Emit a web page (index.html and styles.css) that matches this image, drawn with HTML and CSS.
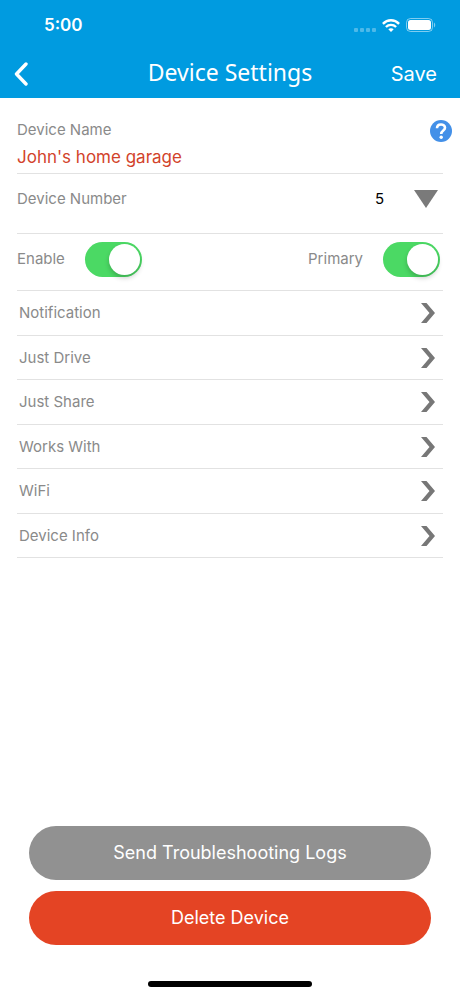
FILE: index.html
```html
<!DOCTYPE html>
<html lang="en">
<head>
<meta charset="utf-8">
<meta name="viewport" content="width=device-width, initial-scale=1">
<title>Device Settings</title>
<link rel="stylesheet" href="styles.css">
</head>
<body>
<svg width="0" height="0" class="sprite" aria-hidden="true">
  <symbol id="chevron" viewBox="0 0 14 20"><path d="M0 0H5.500L14 10L5.500 20H0L8.500 10Z" fill="currentColor"/></symbol>
</svg>
<div class="screen">
  <header class="header">
    <div class="status">
      <span class="time">5:00</span>
      <div class="indicators">
        <svg width="22" height="4" viewBox="0 0 22 4" class="signal" aria-hidden="true"><rect x="0" width="4" height="4" rx="1"/><rect x="6" width="4" height="4" rx="1"/><rect x="12" width="4" height="4" rx="1"/><rect x="18" width="4" height="4" rx="1"/></svg>
        <svg width="18" height="13" viewBox="0 0 18 13" aria-hidden="true"><g fill="none" stroke="#fff" stroke-width="2.4"><path d="M.9 4.8C5.500 .1 12.500 .1 17.100 4.800"/><path d="M3.900 8C6.800 5.200 11.200 5.200 14.100 8"/></g><path d="M9 13L6.300 10.200C7.800 8.800 10.200 8.800 11.700 10.200Z" fill="#fff"/></svg>
        <svg width="30" height="14" viewBox="0 0 30 14" aria-hidden="true"><rect x=".5" y=".5" width="26" height="13" rx="4" fill="none" stroke="#fff" stroke-opacity=".5"/><rect x="2" y="2" width="23" height="10" rx="2.500" fill="#fff"/><path d="M28 4.500C29.600 5.200 29.600 8.800 28 9.500Z" fill="#fff" fill-opacity=".5"/></svg>
      </div>
    </div>
    <nav class="nav">
      <button class="back" type="button" aria-label="Back"><svg width="14" height="24" viewBox="0 0 14 24" aria-hidden="true"><path d="M12 2L2.500 12L12 22" fill="none" stroke="#fff" stroke-width="3.400" stroke-linecap="round" stroke-linejoin="round"/></svg></button>
      <h1 class="title">Device Settings</h1>
      <button class="save" type="button">Save</button>
    </nav>
  </header>
  <main class="content">
    <div class="field name-field">
      <label class="label" for="device-name">Device Name</label>
      <input class="name-input" id="device-name" type="text" value="John's home garage">
      <button class="help" type="button" aria-label="Help"><svg width="22" height="22" viewBox="0 0 22 22" aria-hidden="true"><circle cx="11" cy="11" r="11" fill="#4390e8"/><path d="M7 8.200C7 3.300 15 3.300 15 7.800C15 10.600 11.200 10.400 11.200 14" fill="none" stroke="#fff" stroke-width="2.600"/><circle cx="11.200" cy="17.300" r="1.700" fill="#fff"/></svg></button>
    </div>
    <div class="field number-field">
      <label class="label" for="device-number">Device Number</label>
      <div class="picker">
        <select class="number" id="device-number"><option>5</option></select>
        <svg class="arrow" width="24" height="18" viewBox="0 0 24 18" aria-hidden="true"><path d="M0 0H24L12 18Z" fill="#7a7a7a"/></svg>
      </div>
    </div>
    <div class="field toggles">
      <label class="toggle"><span class="label">Enable</span><input class="switch" type="checkbox" role="switch" checked></label>
      <label class="toggle"><span class="label">Primary</span><input class="switch" type="checkbox" role="switch" checked></label>
    </div>
    <div class="links">
      <a class="link" href="#notification">Notification<svg class="chevron" aria-hidden="true"><use href="#chevron"/></svg></a>
      <a class="link" href="#drive">Just Drive<svg class="chevron" aria-hidden="true"><use href="#chevron"/></svg></a>
      <a class="link" href="#share">Just Share<svg class="chevron" aria-hidden="true"><use href="#chevron"/></svg></a>
      <a class="link" href="#works">Works With<svg class="chevron" aria-hidden="true"><use href="#chevron"/></svg></a>
      <a class="link" href="#wifi">WiFi<svg class="chevron" aria-hidden="true"><use href="#chevron"/></svg></a>
      <a class="link" href="#info">Device Info<svg class="chevron" aria-hidden="true"><use href="#chevron"/></svg></a>
    </div>
  </main>
  <footer class="actions">
    <button class="action" type="button">Send Troubleshooting Logs</button>
    <button class="action danger" type="button">Delete Device</button>
    <div class="home-bar"></div>
  </footer>
</div>
</body>
</html>
```
FILE: styles.css
```css
* { box-sizing: border-box; }
body {
  margin: 0;
  background: #fff;
  color: #8a8a8a;
  font: 15px/20px Inter, "Liberation Sans", sans-serif;
}
button, input, select { font: inherit; border: 0; padding: 0; background: none; }
button, select { cursor: pointer; }
.sprite { position: absolute; }
.screen { display: flex; flex-direction: column; min-height: 100vh; }

.header { background: #009be0; color: #fff; }
.status {
  display: flex;
  justify-content: space-between;
  align-items: center;
  height: 50px;
  padding: 0 24px 0 44px;
}
.time { font-size: 17px; font-weight: 600; }
.indicators { display: flex; align-items: center; gap: 6px; }
.signal { align-self: flex-end; fill: #fff; fill-opacity: .3; }
.nav {
  display: grid;
  grid-template-columns: 1fr auto 1fr;
  align-items: center;
  height: 48px;
  padding: 0 14px;
}
.back { display: flex; justify-self: start; }
.title { margin: 0; padding-bottom: 4px; font: 400 23px/32px "Noto Sans", sans-serif; }
.save { justify-self: end; padding-right: 9px; color: #fff; font-size: 20px; }

.content { flex: 1; padding: 0 17px; }
.field { border-bottom: 1px solid #e2e2e2; }
.name-field {
  position: relative;
  display: flex;
  flex-direction: column;
  height: 76px;
  padding-top: 22px;
}
.name-input { width: 90%; margin-top: 4px; height: 26px; color: #d2432b; font-size: 17px; }
.help { position: absolute; top: 22px; right: -9px; display: flex; }
.number-field {
  display: flex;
  justify-content: space-between;
  align-items: center;
  height: 60px;
  padding-bottom: 9px;
}
.picker { display: grid; align-items: center; justify-items: end; }
.picker > * { grid-area: 1 / 1; }
.number { appearance: none; width: 68px; height: 32px; color: #000; }
.arrow { margin-right: 5px; pointer-events: none; }
.toggles {
  display: flex;
  justify-content: space-between;
  align-items: center;
  height: 57px;
  padding: 0 3px 6px 0;
}
.toggle { display: flex; align-items: center; gap: 20px; }
.switch {
  appearance: none;
  display: flex;
  width: 57px;
  height: 35px;
  margin: 0;
  padding: 2px;
  border-radius: 18px;
  background: #ccc;
}
.switch::before {
  content: "";
  width: 31px;
  height: 31px;
  border-radius: 50%;
  background: #fff;
  box-shadow: 0 3px 5px #0003;
}
.switch:checked { justify-content: flex-end; background: #4bd964; }

.links { display: grid; grid-auto-rows: 1fr; height: 267px; }
.link {
  display: flex;
  justify-content: space-between;
  align-items: center;
  padding: 1px 8px 0 2px;
  border-bottom: 1px solid #e2e2e2;
  color: inherit;
  text-decoration: none;
}
.chevron { width: 14px; height: 20px; color: #777; }

.actions { display: flex; flex-direction: column; gap: 11px; padding: 0 29px 9px; }
.action {
  height: 54px;
  border-radius: 27px;
  background: #919191;
  color: #fff;
  font-size: 18px;
}
.danger { background: #e44424; }
.home-bar {
  align-self: center;
  width: 164px;
  height: 6px;
  margin-top: 25px;
  border-radius: 3px;
  background: #000;
}
```
